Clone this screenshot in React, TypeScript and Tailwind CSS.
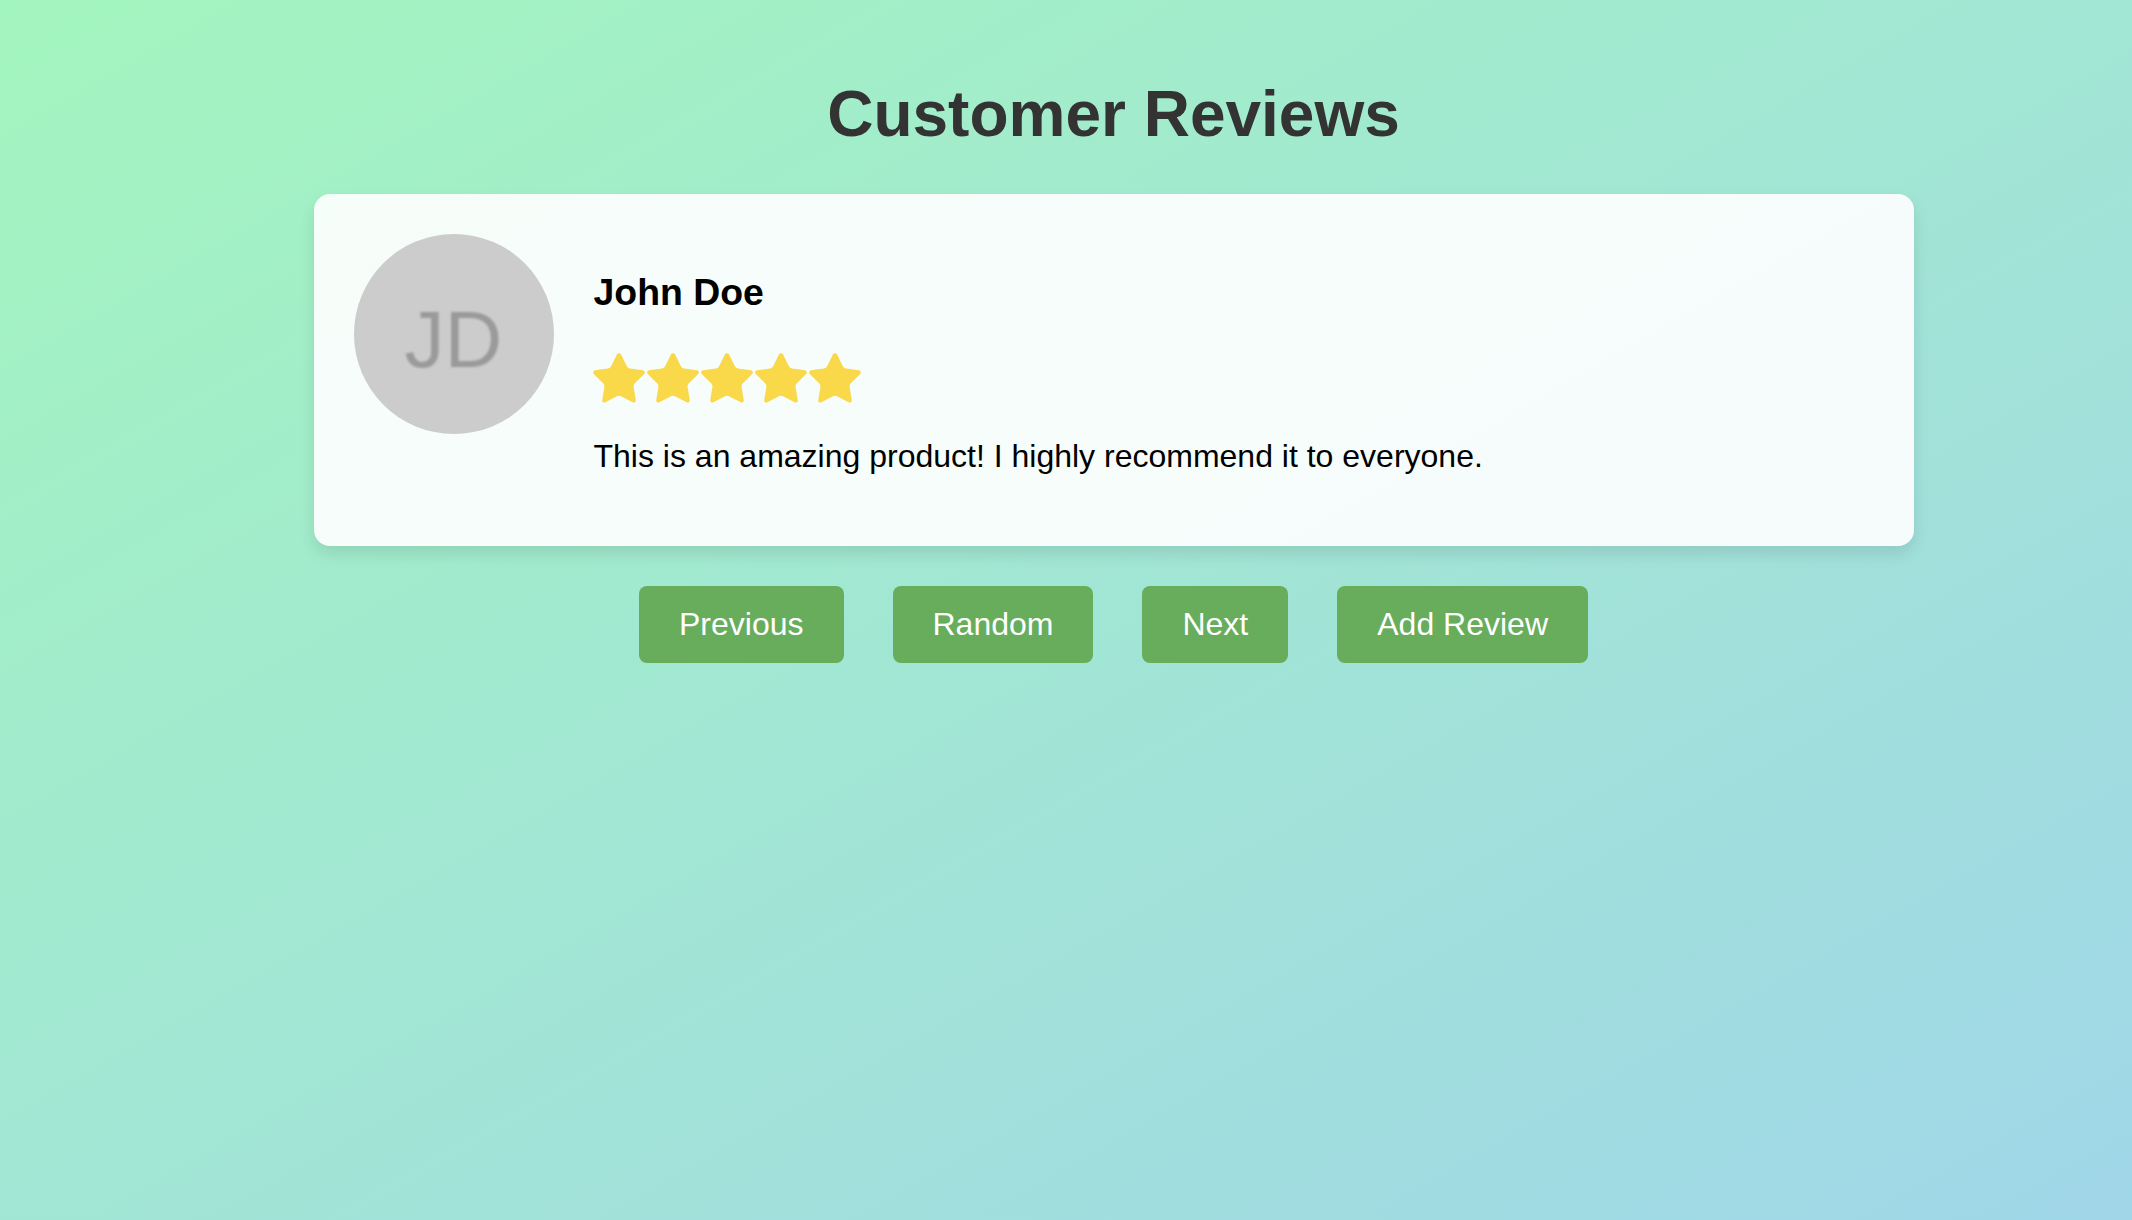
import React from 'react';

const Star: React.FC = () => (
  <svg
    viewBox="2 2 20 19.2"
    width={50}
    height={48}
    className="overflow-visible"
    fill="#f9d84a"
    stroke="#f9d84a"
    strokeWidth={0.7}
    strokeLinejoin="round"
  >
    <path d="M11.525 2.295a.53.53 0 0 1 .95 0l2.31 4.679a2.123 2.123 0 0 0 1.595 1.16l5.166.756a.53.53 0 0 1 .294.904l-3.736 3.638a2.123 2.123 0 0 0-.611 1.878l.882 5.14a.53.53 0 0 1-.771.56l-4.618-2.428a2.122 2.122 0 0 0-1.973 0L6.396 21.01a.53.53 0 0 1-.77-.56l.881-5.139a2.122 2.122 0 0 0-.611-1.879L2.16 9.795a.53.53 0 0 1 .294-.906l5.165-.755a2.122 2.122 0 0 0 1.597-1.16z" />
  </svg>
);

const buttons = ['Previous', 'Random', 'Next', 'Add Review'];

const App: React.FC = () => {
  return (
    <div className="min-h-screen w-full bg-linear-to-br from-[#a3f5be] to-[#a0d6e8] font-['Liberation_Sans',Arial,sans-serif] flex flex-col items-center pl-[95px]">
      {/* Heading */}
      <h1 className="pt-[77px] text-[64px] leading-[74px] font-bold text-[#333333]">Customer Reviews</h1>

      {/* Review card */}
      <div className="mt-[43px] w-[1600px] rounded-[16px] bg-white/90 p-[40px] shadow-[0_8px_16px_rgba(0,0,0,0.1)] flex gap-[40px]">
        <div className="w-[200px] h-[200px] shrink-0 rounded-full bg-[#cccccc] flex items-center justify-center">
          <span className="text-[80px] leading-none text-[#9a9a9a] blur-[1.2px] pt-[12px]">JD</span>
        </div>
        <div className="flex flex-col">
          <h3 className="mt-[37px] text-[37.4px] leading-[43px] font-bold text-black">John Doe</h3>
          <div className="mt-[37px] h-[55px] flex items-start gap-[4px] pt-[3px]">
            {[0, 1, 2, 3, 4].map((i) => (
              <Star key={i} />
            ))}
          </div>
          <p className="mt-[32px] mb-[31px] text-[32px] leading-[37px] text-black">
            This is an amazing product! I highly recommend it to everyone.
          </p>
        </div>
      </div>

      {/* Controls */}
      <div className="mt-[40px] flex gap-[49px]">
        {buttons.map((b) => (
          <button
            key={b}
            className="px-[40px] py-[20px] text-[32px] leading-[37px] rounded-[8px] bg-[#67ad5c] text-white"
          >
            {b}
          </button>
        ))}
      </div>
    </div>
  );
};

export default App;
